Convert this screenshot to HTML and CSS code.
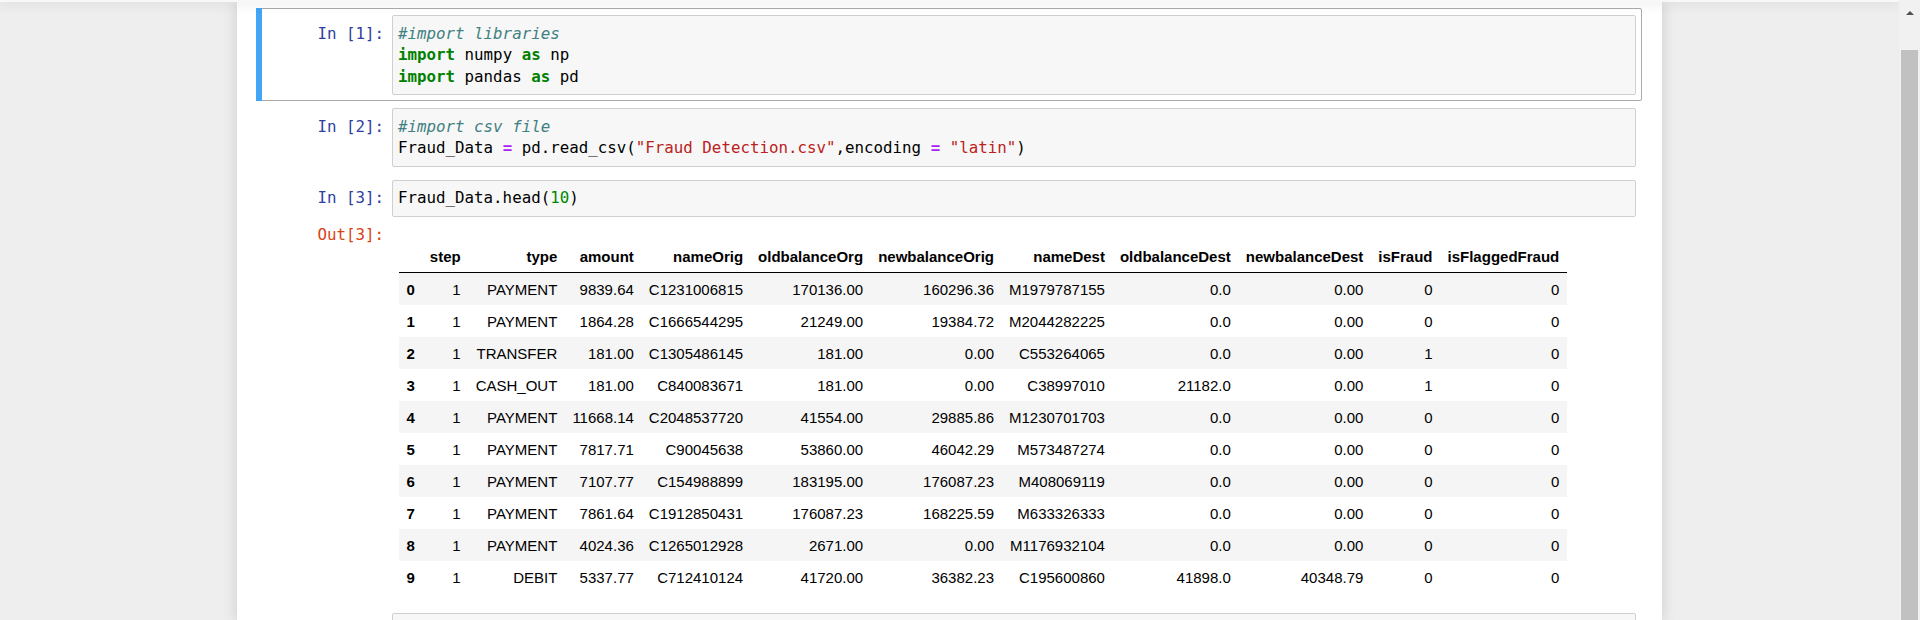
FILE: index.html
```html
<!DOCTYPE html>
<html lang="en">
<head>
<meta charset="utf-8">
<title>Fraud Detection - Jupyter Notebook</title>
<link rel="stylesheet" href="styles.css">
</head>
<body>
<div class="screen">
  <div class="main">
    <div class="header"></div>
    <div class="site">
      <div class="container">
        <div class="cell selected">
          <div class="io">
            <div class="prompt">In&nbsp;[1]:</div>
            <div class="input-area"><pre><span class="c">#import libraries</span>
<span class="k">import</span> numpy <span class="k">as</span> np
<span class="k">import</span> pandas <span class="k">as</span> pd</pre></div>
          </div>
        </div>
        <div class="cell">
          <div class="io">
            <div class="prompt">In&nbsp;[2]:</div>
            <div class="input-area"><pre><span class="c">#import csv file</span>
Fraud_Data <span class="o">=</span> pd.read_csv(<span class="s">"Fraud Detection.csv"</span>,encoding <span class="o">=</span> <span class="s">"latin"</span>)</pre></div>
          </div>
        </div>
        <div class="cell">
          <div class="io">
            <div class="prompt">In&nbsp;[3]:</div>
            <div class="input-area"><pre>Fraud_Data.head(<span class="n">10</span>)</pre></div>
          </div>
          <div class="io">
            <div class="prompt out">Out[3]:</div>
            <div class="output-sub">
              <table class="df">
                <thead>
                  <tr><th></th><th>step</th><th>type</th><th>amount</th><th>nameOrig</th><th>oldbalanceOrg</th><th>newbalanceOrig</th><th>nameDest</th><th>oldbalanceDest</th><th>newbalanceDest</th><th>isFraud</th><th>isFlaggedFraud</th></tr>
                </thead>
                <tbody>
                  <tr><th>0</th><td>1</td><td>PAYMENT</td><td>9839.64</td><td>C1231006815</td><td>170136.00</td><td>160296.36</td><td>M1979787155</td><td>0.0</td><td>0.00</td><td>0</td><td>0</td></tr>
                  <tr><th>1</th><td>1</td><td>PAYMENT</td><td>1864.28</td><td>C1666544295</td><td>21249.00</td><td>19384.72</td><td>M2044282225</td><td>0.0</td><td>0.00</td><td>0</td><td>0</td></tr>
                  <tr><th>2</th><td>1</td><td>TRANSFER</td><td>181.00</td><td>C1305486145</td><td>181.00</td><td>0.00</td><td>C553264065</td><td>0.0</td><td>0.00</td><td>1</td><td>0</td></tr>
                  <tr><th>3</th><td>1</td><td>CASH_OUT</td><td>181.00</td><td>C840083671</td><td>181.00</td><td>0.00</td><td>C38997010</td><td>21182.0</td><td>0.00</td><td>1</td><td>0</td></tr>
                  <tr><th>4</th><td>1</td><td>PAYMENT</td><td>11668.14</td><td>C2048537720</td><td>41554.00</td><td>29885.86</td><td>M1230701703</td><td>0.0</td><td>0.00</td><td>0</td><td>0</td></tr>
                  <tr><th>5</th><td>1</td><td>PAYMENT</td><td>7817.71</td><td>C90045638</td><td>53860.00</td><td>46042.29</td><td>M573487274</td><td>0.0</td><td>0.00</td><td>0</td><td>0</td></tr>
                  <tr><th>6</th><td>1</td><td>PAYMENT</td><td>7107.77</td><td>C154988899</td><td>183195.00</td><td>176087.23</td><td>M408069119</td><td>0.0</td><td>0.00</td><td>0</td><td>0</td></tr>
                  <tr><th>7</th><td>1</td><td>PAYMENT</td><td>7861.64</td><td>C1912850431</td><td>176087.23</td><td>168225.59</td><td>M633326333</td><td>0.0</td><td>0.00</td><td>0</td><td>0</td></tr>
                  <tr><th>8</th><td>1</td><td>PAYMENT</td><td>4024.36</td><td>C1265012928</td><td>2671.00</td><td>0.00</td><td>M1176932104</td><td>0.0</td><td>0.00</td><td>0</td><td>0</td></tr>
                  <tr><th>9</th><td>1</td><td>DEBIT</td><td>5337.77</td><td>C712410124</td><td>41720.00</td><td>36382.23</td><td>C195600860</td><td>41898.0</td><td>40348.79</td><td>0</td><td>0</td></tr>
                </tbody>
              </table>
            </div>
          </div>
        </div>
        <div class="cell">
          <div class="io">
            <div class="prompt"></div>
            <div class="input-area"><pre> </pre></div>
          </div>
        </div>
      </div>
    </div>
  </div>
  <div class="scrollbar">
    <div class="sb-button"><div class="sb-arrow"></div></div>
    <div class="sb-thumb"></div>
  </div>
</div>
</body>
</html>
```
FILE: styles.css
```css
html, body {
  margin: 0;
  padding: 0;
}
body {
  width: 1920px;
  height: 620px;
  overflow: hidden;
  background: #eeeeee;
  font-family: "Liberation Sans", Arial, sans-serif;
}
.screen {
  display: flex;
  height: 620px;
}
.main {
  flex: 1;
  min-width: 0;
  display: flex;
  flex-direction: column;
  overflow: hidden;
}
.header {
  height: 2px;
  flex: none;
  background: #f8f8f8;
  box-shadow: 0 0 12px 1px rgba(87, 87, 87, 0.2);
  position: relative;
  z-index: 2;
}
.site {
  flex: 1;
  min-height: 0;
  overflow: hidden;
  display: flex;
  justify-content: center;
}
.container {
  width: 1425px;
  flex: none;
  box-sizing: border-box;
  background: #ffffff;
  box-shadow: 0 0 12px 1px rgba(87, 87, 87, 0.2);
  padding: 6px 20px 0 19px;
}
.cell {
  border: 1px solid transparent;
  border-radius: 2px;
  padding: 6px 5px 5px 6px;
  position: relative;
}
.cell.selected {
  border-color: #ababab;
}
.cell.selected::before {
  content: "";
  position: absolute;
  top: -1px;
  left: -1px;
  width: 6px;
  height: calc(100% + 2px);
  background: #42a5f5;
}
.io {
  display: flex;
  align-items: flex-start;
}
.prompt {
  width: 129px;
  flex: none;
  box-sizing: border-box;
  padding: 7.5px 8px 0 0;
  text-align: right;
  font-family: "DejaVu Sans Mono", "Liberation Mono", monospace;
  font-size: 15.8px;
  line-height: 21.5px;
  color: #303f9f;
  white-space: nowrap;
}
.prompt.out {
  color: #d84315;
}
.input-area {
  flex: 1;
  min-width: 0;
  background: #f7f7f7;
  border: 1px solid #cfcfcf;
  border-radius: 2px;
  padding: 6.75px 5px 6.75px 5px;
}
.input-area pre {
  margin: 0;
  font-family: "DejaVu Sans Mono", "Liberation Mono", monospace;
  font-size: 15.8px;
  line-height: 21.5px;
  color: #000000;
  white-space: pre;
}
.c { color: #408080; font-style: italic; }
.k { color: #008000; font-weight: bold; }
.o { color: #aa22ff; font-weight: bold; }
.s { color: #ba2121; }
.n { color: #008800; }
.output-sub {
  flex: 1;
  min-width: 0;
  padding: 7px;
}
.df {
  border-collapse: collapse;
  border-spacing: 0;
  margin-top: 16.5px;
  font-size: 15px;
  color: #000000;
}
.df th, .df td {
  padding: 7.5px;
  text-align: right;
  vertical-align: middle;
  line-height: normal;
  white-space: nowrap;
}
.df th {
  font-weight: bold;
}
.df thead {
  border-bottom: 1px solid #000000;
}
.df tbody tr:nth-child(odd) {
  background: #f5f5f5;
}
.scrollbar {
  width: 21px;
  flex: none;
  background: #f1f1f1;
  display: flex;
  flex-direction: column;
  align-items: center;
}
.sb-button {
  height: 50px;
  width: 17px;
  display: flex;
  justify-content: center;
  padding-top: 11px;
  box-sizing: border-box;
}
.sb-arrow {
  width: 0;
  height: 0;
  border-left: 4px solid transparent;
  border-right: 4px solid transparent;
  border-bottom: 4px solid #505050;
}
.sb-thumb {
  flex: 1;
  width: 17px;
  background: #c1c1c1;
}
```
